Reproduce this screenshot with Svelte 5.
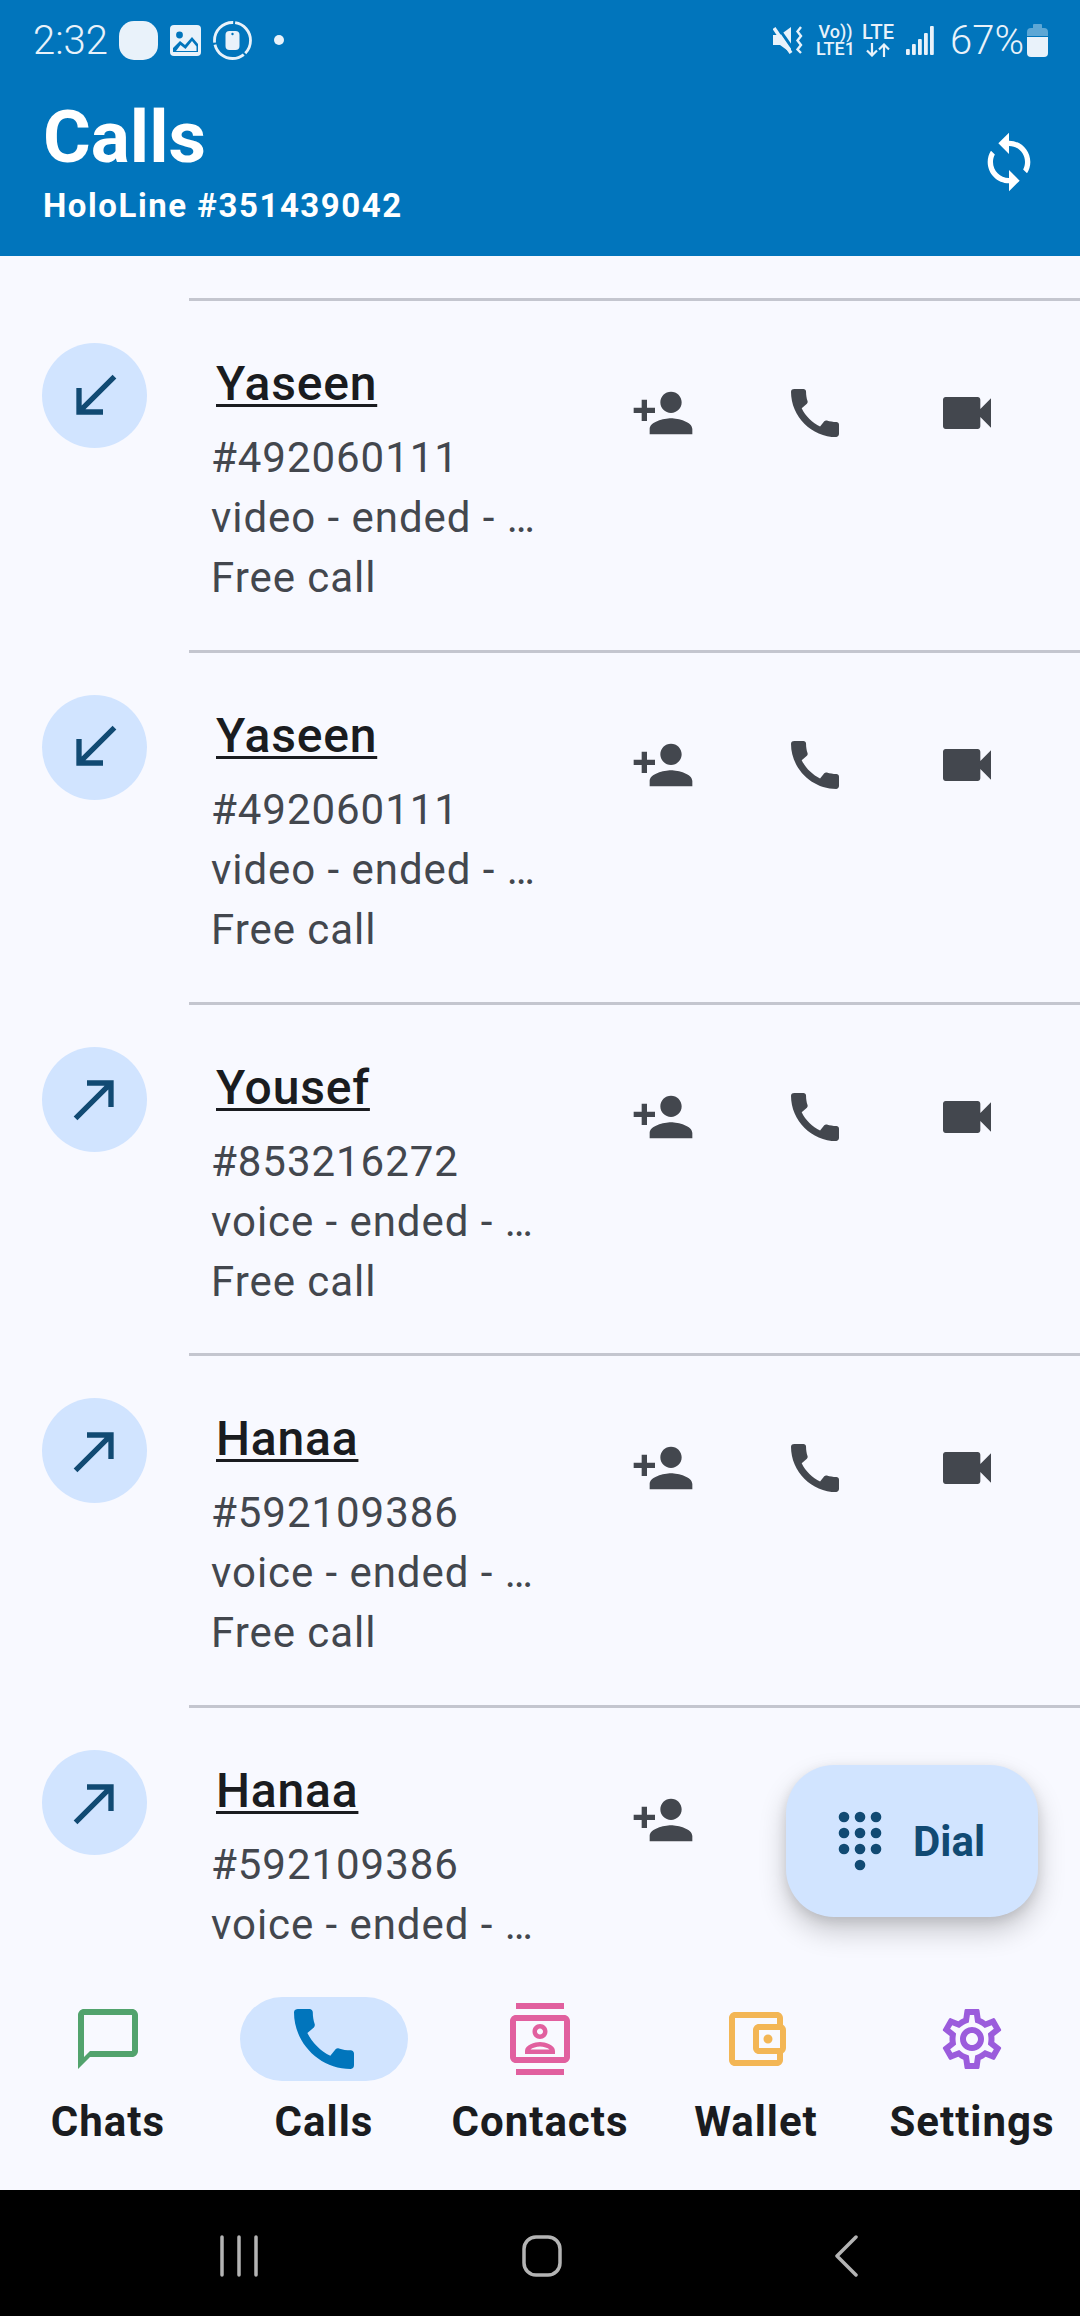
<script>
	const icons = {
		personAdd:
			'M15 12c2.21 0 4-1.79 4-4s-1.79-4-4-4-4 1.79-4 4 1.79 4 4 4zm-9-2V7H4v3H1v2h3v3h2v-3h3v-2H6zm9 4c-2.67 0-8 1.34-8 4v2h16v-2c0-2.66-5.33-4-8-4z',
		phone:
			'M20.01 15.38c-1.23 0-2.42-.2-3.53-.56-.35-.12-.74-.03-1.01.24l-1.57 1.97c-2.83-1.35-5.48-3.9-6.89-6.83l1.95-1.66c.27-.28.35-.67.24-1.02-.37-1.11-.56-2.3-.56-3.53 0-.54-.45-.99-.99-.99H4.19C3.65 3 3 3.24 3 3.99 3 13.28 10.73 21 20.01 21c.71 0 .99-.63.99-1.18v-3.45c0-.54-.45-.99-.99-.99z',
		video:
			'M17 10.5V7c0-.55-.45-1-1-1H4c-.55 0-1 .45-1 1v10c0 .55.45 1 1 1h12c.55 0 1-.45 1-1v-3.5l4 4v-11l-4 4z',
		sync: 'M12 4V1L8 5l4 4V6c3.31 0 6 2.69 6 6 0 1.01-.25 1.97-.7 2.8l1.46 1.46C19.54 15.03 20 13.57 20 12c0-4.42-3.58-8-8-8zm0 14c-3.31 0-6-2.69-6-6 0-1.01.25-1.97.7-2.8L5.24 7.74C4.46 8.97 4 10.43 4 12c0 4.42 3.58 8 8 8v3l4-4-4-4v3z',
		received: 'M20 5.41 18.59 4 7 15.59V9H5v10h10v-2H8.41z',
		made: 'M9 5v2h6.59L4 18.59 5.41 20 17 8.41V15h2V5z',
		chat: 'M20 2H4c-1.1 0-2 .9-2 2v18l4-4h14c1.1 0 2-.9 2-2V4c0-1.1-.9-2-2-2zm0 14H6l-2 2V4h16v12z',
		contacts:
			'M20 0H4v2h16V0zM4 24h16v-2H4v2zM20 4H4c-1.1 0-2 .9-2 2v12c0 1.1.9 2 2 2h16c1.1 0 2-.9 2-2V6c0-1.1-.9-2-2-2zm0 14H4V6h16v12zm-8-6c1.38 0 2.5-1.12 2.5-2.5S13.38 7 12 7 9.5 8.12 9.5 9.5 10.62 12 12 12zm0-3.5c.55 0 1 .45 1 1s-.45 1-1 1-1-.45-1-1 .45-1 1-1zm5 7.49C17 13.9 13.69 13 12 13s-5 .9-5 2.99V17h10v-1.01zm-8.19-.49c.61-.52 2.03-1 3.19-1 1.17 0 2.59.48 3.2 1H8.81z',
		wallet:
			'M21 7.28V5c0-1.1-.9-2-2-2H5c-1.11 0-2 .9-2 2v14c0 1.1.89 2 2 2h14c1.1 0 2-.9 2-2v-2.28c.59-.35 1-.98 1-1.72V9c0-.74-.41-1.37-1-1.72zM20 9v6h-7V9h7zM5 19V5h14v2h-6c-1.1 0-2 .9-2 2v6c0 1.1.9 2 2 2h6v2H5zM16 13.5a1.5 1.5 0 1 0 0-3 1.5 1.5 0 0 0 0 3z',
		settings:
			'M19.43 12.98c.04-.32.07-.64.07-.98 0-.34-.03-.66-.07-.98l2.11-1.65c.19-.15.24-.42.12-.64l-2-3.46c-.09-.16-.26-.25-.44-.25-.06 0-.12.01-.17.03l-2.49 1c-.52-.4-1.08-.73-1.69-.98l-.38-2.65C14.46 2.18 14.25 2 14 2h-4c-.25 0-.46.18-.49.42l-.38 2.65c-.61.25-1.17.59-1.69.98l-2.49-1c-.06-.02-.12-.03-.18-.03-.17 0-.34.09-.43.25l-2 3.46c-.13.22-.07.49.12.64l2.11 1.65c-.04.32-.07.65-.07.98 0 .33.03.66.07.98l-2.11 1.65c-.19.15-.24.42-.12.64l2 3.46c.09.16.26.25.44.25.06 0 .12-.01.17-.03l2.49-1c.52.4 1.08.73 1.69.98l.38 2.65c.03.24.24.42.49.42h4c.25 0 .46-.18.49-.42l.38-2.65c.61-.25 1.17-.59 1.69-.98l2.49 1c.06.02.12.03.18.03.17 0 .34-.09.43-.25l2-3.46c.12-.22.07-.49-.12-.64l-2.11-1.65zm-1.98-1.71c.04.31.05.52.05.73 0 .21-.02.43-.05.73l-.14 1.13.89.7 1.08.84-.7 1.21-1.27-.51-1.04-.42-.9.68c-.43.32-.84.56-1.25.73l-1.06.43-.16 1.13-.2 1.35h-1.4l-.19-1.35-.16-1.13-1.06-.43c-.43-.18-.83-.41-1.23-.71l-.91-.7-1.06.43-1.27.51-.7-1.21 1.08-.84.89-.7-.14-1.13c-.03-.31-.05-.54-.05-.74s.02-.43.05-.73l.14-1.13-.89-.7-1.08-.84.7-1.21 1.27.51 1.04.42.9-.68c.43-.32.84-.56 1.25-.73l1.06-.43.16-1.13.2-1.35h1.39l.19 1.35.16 1.13 1.06.43c.43.18.83.41 1.23.71l.91.7 1.06-.43 1.27-.51.7 1.21-1.07.85-.89.7.14 1.13zM12 8c-2.21 0-4 1.79-4 4s1.79 4 4 4 4-1.79 4-4-1.79-4-4-4zm0 6c-1.1 0-2-.9-2-2s.9-2 2-2 2 .9 2 2-.9 2-2 2z'
	};

	// the last row runs under the tab bar, its cost line is never visible
	const calls = [
		{ name: 'Yaseen', number: '#492060111', kind: 'video', dir: 'received', cost: 'Free call' },
		{ name: 'Yaseen', number: '#492060111', kind: 'video', dir: 'received', cost: 'Free call' },
		{ name: 'Yousef', number: '#853216272', kind: 'voice', dir: 'made', cost: 'Free call' },
		{ name: 'Hanaa', number: '#592109386', kind: 'voice', dir: 'made', cost: 'Free call' },
		{ name: 'Hanaa', number: '#592109386', kind: 'voice', dir: 'made' }
	];

	const tabs = [
		{ label: 'Chats', icon: 'chat', color: '#52a36d' },
		{ label: 'Calls', icon: 'phone', color: '#0175bc', active: true },
		{ label: 'Contacts', icon: 'contacts', color: '#e1609f' },
		{ label: 'Wallet', icon: 'wallet', color: '#f3b655' },
		{ label: 'Settings', icon: 'settings', color: '#9b5cdc' }
	];

	const dialDots = [
		[6, 3], [12, 3], [18, 3],
		[6, 9], [12, 9], [18, 9],
		[6, 15], [12, 15], [18, 15],
		[12, 21]
	];

	const signalBars = [6, 11, 16, 22, 29];
</script>

<div class="app">
	<header class="header">
		<div class="status">
			<div class="status-left">
				<span class="clock">2:32</span>
				<span class="blob"></span>
				<svg class="st-image" viewBox="0 0 31 31">
					<rect width="31" height="31" rx="4" fill="#e9f2fa" />
					<circle cx="9.5" cy="10" r="3.4" fill="#0175bc" />
					<path d="M3 27v-4l7-7 5 4 7-8 6 7v8z" fill="#0175bc" />
					<path d="M6 26l4.5-6 5 4 6.500-8 4.500 5.500V26z" fill="#e9f2fa" />
				</svg>
				<svg class="st-ring" viewBox="0 0 39 39">
					<circle cx="19.5" cy="19.5" r="18" fill="none" stroke="#e9f2fa" stroke-width="2.8" stroke-dasharray="14 2 36 2 31 2 26 0" />
					<rect x="12.5" y="10" width="14" height="19" rx="4" fill="#e9f2fa" />
					<circle cx="19.500" cy="13" r="1.2" fill="#0175bc" />
				</svg>
				<span class="dot"></span>
			</div>
			<div class="status-right">
				<svg class="st-mute" viewBox="0 0 30 28">
					<path d="M0 9h7l11-8v26L7 19H0z" fill="#e9f2fa" />
					<path d="M4 0l18 26" stroke="#0175bc" stroke-width="3" fill="none" />
					<path d="M1 2l17 25" stroke="#e9f2fa" stroke-width="3.500" fill="none" />
					<path d="M28 1l-3.500 4.500 3.500 4.500-3.500 4.500 3.500 4.500-3.500 4.500 3.500 3.500" fill="none" stroke="#e9f2fa" stroke-width="2.400" />
				</svg>
				<div class="net volte"><span>Vo))</span><span>LTE1</span></div>
				<div class="net lte">
					<span>LTE</span>
					<svg viewBox="0 0 24 14">
						<path d="M6 0v12M1 7.500l5 5 5-5M18 14V2M13 6.500l5-5 5 5" fill="none" stroke="#e9f2fa" stroke-width="2.200" />
					</svg>
				</div>
				<svg class="st-signal" viewBox="0 0 28 29">
					{#each signalBars as h, i}
						<rect x={i * 6} y={29 - h} width="3.800" height={h} rx="1" fill="#e9f2fa" />
					{/each}
				</svg>
				<span class="percent">67%</span>
				<svg class="st-battery" viewBox="0 0 21 33">
					<path d="M7 0h7a1 1 0 0 1 1 1v3h2a4 4 0 0 1 4 4v4H0V8a4 4 0 0 1 4-4h2V1a1 1 0 0 1 1-1z" fill="#e9f2fa" opacity="0.4" />
					<path d="M0 13h21v16a4 4 0 0 1-4 4H4a4 4 0 0 1-4-4z" fill="#e9f2fa" />
				</svg>
			</div>
		</div>
		<div class="titlebar">
			<div class="titles">
				<h1>Calls</h1>
				<p>HoloLine #351439042</p>
			</div>
			<svg class="sync" viewBox="0 0 24 24"><path d={icons.sync} /></svg>
		</div>
	</header>

	<main class="list">
		{#each calls as call}
			<section class="row">
				<div class="divider"></div>
				<div class="row-body">
					<div class="circle">
						<svg viewBox="0 0 24 24"><path d={icons[call.dir]} /></svg>
					</div>
					<div class="info">
						<span class="name">{call.name}</span>
						<span class="line">{call.number}</span>
						<span class="line">{call.kind} - ended - …</span>
						{#if call.cost}
							<span class="line">{call.cost}</span>
						{/if}
					</div>
					<div class="actions">
						{#each ['personAdd', 'phone', 'video'] as icon}
							<button aria-label={icon}>
								<svg viewBox="0 0 24 24"><path d={icons[icon]} /></svg>
							</button>
						{/each}
					</div>
				</div>
			</section>
		{/each}
	</main>

	<button class="fab">
		<svg viewBox="0 0 24 24">
			{#each dialDots as [cx, cy]}
				<circle {cx} {cy} r="2" />
			{/each}
		</svg>
		<span>Dial</span>
	</button>

	<nav class="tabs">
		{#each tabs as tab}
			<div class="tab">
				<div class="pill" class:active={tab.active}>
					<svg class:big={tab.active} viewBox="0 0 24 24" fill={tab.color} fill-rule="evenodd">
						<path d={icons[tab.icon]} />
					</svg>
				</div>
				<span>{tab.label}</span>
			</div>
		{/each}
	</nav>

	<div class="sysnav">
		<svg class="recents" viewBox="0 0 38 42">
			<path d="M2 2v38M19 2v38M36 2v38" />
		</svg>
		<svg class="home" viewBox="0 0 40 42">
			<rect x="2" y="2" width="36" height="38" rx="12" />
		</svg>
		<svg class="back" viewBox="0 0 24 42">
			<path d="M22 2 3 21l19 19" stroke-linejoin="round" />
		</svg>
	</div>
</div>

<style>
	:global(body) {
		margin: 0;
		background: #f8f9ff;
	}

	.app {
		position: relative;
		display: flex;
		flex-direction: column;
		width: 1080px;
		height: 2316px;
		overflow: hidden;
		background: #f8f9ff;
		font-family: Roboto, sans-serif;
	}

	/* header */
	.header {
		flex-shrink: 0;
		height: 256px;
		background: #0175bc;
		color: #fff;
	}

	.status {
		display: flex;
		justify-content: space-between;
		align-items: center;
		height: 80px;
		padding: 0 32px 0 33px;
		color: #e9f2fa;
	}

	.status-left,
	.status-right {
		display: flex;
		align-items: center;
	}

	.clock {
		font-size: 40px;
		font-weight: 300;
		width: 72px;
		margin-right: 14px;
		white-space: nowrap;
	}

	.blob {
		width: 39px;
		height: 39px;
		border-radius: 15px;
		background: #e9f2fa;
		margin-right: 12px;
	}

	.st-image {
		width: 31px;
		height: 31px;
		margin-right: 12px;
	}

	.st-ring {
		width: 39px;
		height: 39px;
		margin-right: 22px;
	}

	.dot {
		width: 10px;
		height: 10px;
		border-radius: 50%;
		background: #e9f2fa;
	}

	.st-mute {
		width: 30px;
		height: 28px;
		margin-right: 13px;
	}

	.net {
		display: flex;
		flex-direction: column;
		align-items: center;
		font-size: 18px;
		font-weight: 500;
		line-height: 17px;
	}

	.volte {
		width: 39px;
		margin-right: 8px;
	}

	.lte {
		width: 30px;
		margin-right: 13px;
		font-size: 20px;
	}

	.lte svg {
		width: 24px;
		height: 14px;
		margin-top: 2px;
	}

	.st-signal {
		width: 28px;
		height: 29px;
		margin-right: 16px;
	}

	.percent {
		font-size: 40px;
		font-weight: 300;
		width: 70px;
		margin-right: 7px;
		white-space: nowrap;
	}

	.st-battery {
		width: 21px;
		height: 33px;
	}

	.titlebar {
		display: flex;
		justify-content: space-between;
		align-items: center;
		height: 176px;
		padding: 0 39px 0 43px;
	}

	.titles {
		align-self: flex-start;
		padding-top: 15px;
	}

	h1 {
		margin: 0 0 5px;
		font-size: 73px;
		font-weight: 700;
		line-height: 84px;
	}

	.titles p {
		margin: 0;
		font-size: 33px;
		font-weight: 700;
		line-height: 44px;
		letter-spacing: 1.55px;
	}

	.sync {
		width: 64px;
		height: 64px;
		margin-bottom: 12px;
		fill: #fff;
	}

	/* call list */
	.list {
		flex: 1;
		min-height: 0;
		overflow: hidden;
		padding-top: 42px;
	}

	.row {
		height: 351.8px;
	}

	.divider {
		height: 3px;
		margin-left: 189px;
		background: #c4c6cf;
	}

	.row-body {
		display: flex;
		padding: 0 37px 0 42px;
	}

	.circle {
		display: flex;
		align-items: center;
		justify-content: center;
		flex-shrink: 0;
		width: 105px;
		height: 105px;
		margin: 42px 64px 0 0;
		border-radius: 50%;
		background: #d1e4ff;
	}

	.circle svg {
		width: 64px;
		height: 64px;
		fill: #114a73;
	}

	.info {
		display: flex;
		flex-direction: column;
		flex: 1;
		min-width: 0;
		padding-top: 47px;
	}

	.name {
		align-self: flex-start;
		margin: 0 0 8px 5px;
		font-size: 48px;
		font-weight: 500;
		line-height: 72px;
		letter-spacing: 0.8px;
		color: #1a1c20;
		text-decoration: underline;
		text-decoration-thickness: 3px;
		text-underline-offset: 4px;
	}

	.line {
		font-size: 42px;
		line-height: 60px;
		letter-spacing: 0.95px;
		color: #43474e;
		white-space: nowrap;
	}

	.actions {
		display: flex;
		flex-shrink: 0;
		margin-top: 80px;
		align-self: flex-start;
	}

	.actions button {
		display: flex;
		justify-content: center;
		width: 152px;
		padding: 0;
		border: none;
		background: none;
	}

	.actions svg {
		width: 64px;
		height: 64px;
		fill: #43474e;
	}

	/* floating dial button */
	.fab {
		position: absolute;
		left: 786px;
		top: 1765px;
		display: flex;
		align-items: center;
		gap: 21px;
		width: 252px;
		height: 152px;
		padding: 0 0 0 42px;
		border: none;
		border-radius: 48px;
		background: #d1e4ff;
		box-shadow:
			0 14px 28px rgba(0, 0, 0, 0.2),
			0 4px 12px rgba(0, 0, 0, 0.1);
		color: #114a73;
		font-family: inherit;
		font-size: 42px;
		font-weight: 700;
	}

	.fab svg {
		width: 64px;
		height: 64px;
		fill: #114a73;
	}

	/* bottom tabs */
	.tabs {
		flex-shrink: 0;
		display: flex;
		height: 233px;
		padding-top: 40px;
		box-sizing: border-box;
		background: #f8f9ff;
	}

	.tab {
		flex: 1;
		display: flex;
		flex-direction: column;
		align-items: center;
	}

	.pill {
		display: flex;
		align-items: center;
		justify-content: center;
		width: 168px;
		height: 84px;
		margin-bottom: 11px;
		border-radius: 42px;
	}

	.pill.active {
		background: #d1e4ff;
	}

	.pill svg {
		width: 72px;
		height: 72px;
	}

	.pill svg.big {
		width: 80px;
		height: 80px;
	}

	.tab span {
		font-size: 42px;
		font-weight: 700;
		line-height: 60px;
		letter-spacing: 1px;
		color: #1a1c20;
		white-space: nowrap;
	}

	/* system navigation */
	.sysnav {
		flex-shrink: 0;
		position: relative;
		display: flex;
		align-items: center;
		height: 126px;
		background: #000;
	}

	.sysnav svg {
		position: absolute;
		top: 45px;
		height: 42px;
		fill: none;
		stroke: #b4b4b4;
		stroke-width: 3.5;
		stroke-linecap: round;
	}

	.recents {
		left: 220px;
		width: 38px;
	}

	.home {
		left: 522px;
		width: 40px;
	}

	.back {
		left: 834px;
		width: 24px;
	}
</style>
